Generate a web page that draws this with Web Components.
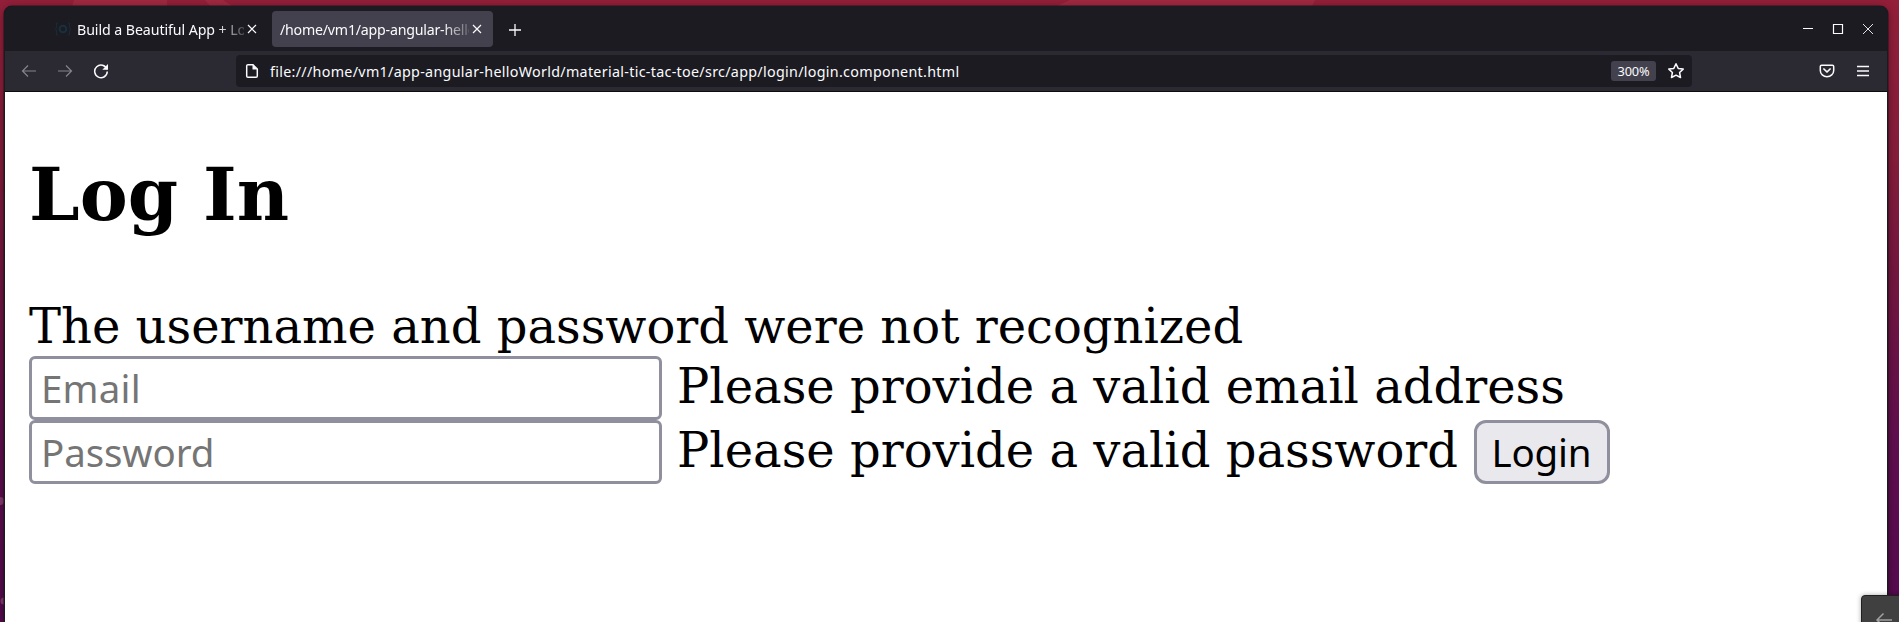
<!DOCTYPE html>
<html lang="en"><head><meta charset="utf-8"><title>Log In</title>
<style>html,body{margin:0;height:100%;overflow:hidden}</style></head>
<body><desk-top></desk-top>
<script>
const define = (name, html, after) => customElements.define(name, class extends HTMLElement {
  constructor(){ super(); this.attachShadow({mode:'open'}).innerHTML = html; }
  connectedCallback(){ if (after) after(this, this.shadowRoot); }
});

/* A single line of text tracked so that it fills the width given in its "w" attribute. */
define('fit-text', `<style>:host{display:block;white-space:nowrap}span{display:inline-block}</style><span><slot></slot></span>`,
  (el, root) => {
    const s = root.querySelector('span'), n = el.textContent.length;
    const w = s.getBoundingClientRect().width;
    if (w) s.style.letterSpacing = ((+el.getAttribute('w') - w) / n).toFixed(3) + 'px';
  });

const icons = {
  back:'<path d="M15 8H1.500M7 2.500 1.500 8 7 13.500"/>',
  forward:'<path d="M1 8h13.500M9 2.500 14.500 8 9 13.500"/>',
  reload:'<path d="M13.900 6.200A6.300 6.300 0 1 0 14.300 8.600" stroke-width="1.500"/><path d="M15 1v5.700H9.300z" fill="currentColor" stroke="none"/>',
  page:'<path d="M4 1.700h5L13.300 6v7a1.300 1.300 0 0 1-1.300 1.300H4A1.300 1.300 0 0 1 2.700 13V3A1.300 1.300 0 0 1 4 1.700z" stroke-width="1.500"/><path d="M8.500 1.500v5h5z" fill="currentColor" stroke="none"/>',
  star:'<path d="M8 .8l2.200 4.600 5 .7-3.600 3.400.9 5L8 12.200l-4.500 2.300.9-5L.8 6.100l5-.7z" stroke-width="1.500" stroke-linejoin="round"/>',
  pocket:'<path d="M2.600 2.200h10.800a1.300 1.300 0 0 1 1.300 1.300V7.500a6.700 6.200 0 0 1-13.400 0V3.500a1.300 1.300 0 0 1 1.300-1.300z" stroke-width="1.500"/><path d="M4.900 6 8 9l3.100-3" stroke-width="1.700" stroke-linecap="round" stroke-linejoin="round"/>',
  menu:'<path d="M2 3.500h12M2 8h12M2 12.500h12" stroke-width="1.400"/>',
  close:'<path d="M4 4l8 8M12 4l-8 8"/>',
  plus:'<path d="M8 2v12M2 8h12" stroke-width="1.300"/>',
  min:'<path d="M3 7.500h10"/>',
  max:'<path d="M3.500 3.500h9v9h-9z"/>',
  exit:'<path d="M3 3l10 10M13 3 3 13" stroke-width=".9"/>',
  favicon:'<path d="M3 2H1.500v4L.6 8l.9 2v4H3M13 2h1.500v4l.9 2-.9 2v4H13" stroke-width=".8"/><circle cx="8" cy="8" r="3.300" stroke-width="2"/>'
};
define('ui-icon', `<style>:host{display:block;width:16px;height:16px;flex:none}svg{display:block;width:100%;height:100%}</style>
<svg viewBox="0 0 16 16" fill="none" stroke="currentColor" stroke-width="1.200"></svg>`,
  (el, root) => root.querySelector('svg').innerHTML = icons[el.getAttribute('name')]);

define('browser-tab', `<style>
:host{display:flex;align-items:center;box-sizing:border-box;height:36px;width:221px;padding:1px 8px 0;border-radius:4px;font-size:14.200px;color:#fbfbfe}
:host([active]){background:#42414d}
.label{flex:1;min-width:0;overflow:hidden;-webkit-mask-image:linear-gradient(90deg,#000 calc(100% - 27px),#0003)}
.label{padding-top:1px}
::slotted(ui-icon){color:#18303e;margin-right:6px}
</style><slot name="icon"></slot><div class="label"><slot></slot></div><ui-icon name="close"></ui-icon>`);

define('tab-strip', `<style>
:host{display:flex;align-items:center;height:45px;background:#1c1b22;color:#fbfbfe;box-sizing:border-box;padding:0 11px 0 42px}
.second{margin-left:4px}.plus{margin:2px 0 0 14px}.win{display:flex;gap:14px;margin-left:auto}
</style>
<browser-tab><ui-icon slot="icon" name="favicon"></ui-icon><fit-text w="190">Build a Beautiful App + Login</fit-text></browser-tab>
<browser-tab active class="second"><fit-text w="209">/home/vm1/app-angular-helloW</fit-text></browser-tab>
<ui-icon class="plus" name="plus"></ui-icon>
<div class="win"><ui-icon name="min"></ui-icon><ui-icon name="max"></ui-icon><ui-icon name="exit"></ui-icon></div>`);

define('tool-bar', `<style>
:host{display:flex;align-items:center;height:40px;background:#2b2a33;color:#fbfbfe;box-sizing:border-box;padding:0 16px}
.off{color:#85848a}.gap{margin-left:20px}
.url{display:flex;align-items:center;box-sizing:border-box;width:1456px;height:32px;margin-left:127px;border-radius:4px;background:#1c1b22;padding:0 8px;font-size:14.300px}
.url fit-text{margin-left:10px}
.zoom{margin-left:auto;width:45px;height:20px;line-height:21px;border-radius:3px;background:#42414d;font-size:12.800px;display:flex;justify-content:center}
.url .zoom fit-text{margin:0}
.star{margin:0 0 0 12px}
.pocket{margin-left:auto}
</style>
<ui-icon class="off" name="back"></ui-icon><ui-icon class="off gap" name="forward"></ui-icon><ui-icon class="gap" name="reload"></ui-icon>
<div class="url"><ui-icon name="page"></ui-icon><fit-text w="689.500">file:///home/vm1/app-angular-helloWorld/material-tic-tac-toe/src/app/login/login.component.html</fit-text>
<div class="zoom"><fit-text w="32">300%</fit-text></div><ui-icon class="star" name="star"></ui-icon></div>
<ui-icon class="pocket" name="pocket"></ui-icon><ui-icon class="gap" name="menu"></ui-icon>`);

define('text-field', `<style>
:host{display:block;width:633px;height:64px}
input{box-sizing:border-box;width:100%;height:100%;margin:0;border:3px solid #8f8f9d;border-radius:6px;padding:0 9px 1px;background:#fff;font:38.500px "Noto Sans",sans-serif;outline:0;display:block}
input::placeholder{color:#757575;opacity:1;letter-spacing:var(--track,0)}
</style><input>`, (el, root) => {
  const i = root.querySelector('input'); i.placeholder = el.getAttribute('label'); i.type = el.getAttribute('type');
});

define('login-button', `<style>:host{display:block}
button{box-sizing:border-box;width:136px;height:64px;border:3px solid #8f8f9d;border-radius:12px;background:#e9e9ed;color:#000;padding:0 1px 1px 0;margin:0;font:38.500px "Noto Sans",sans-serif;display:flex;align-items:center;justify-content:center}
</style><button><fit-text w="100">Login</fit-text></button>`);

define('login-page', `<style>
:host{display:block;flex:1;background:#fff;color:#000;font:48px/56px "DejaVu Serif",serif;padding:0 24px;overflow:hidden}
h1{font-size:72px;line-height:84px;margin:61px 0 0;white-space:nowrap}
p{margin:61px 0 0;height:58px;line-height:56px;white-space:nowrap}
.row{display:flex;height:64px;white-space:nowrap}
.row span{margin-left:15px;line-height:60px}
login-button{margin-left:16px}
.row .mail{--track:.2px}.row .pass{--track:-.1px}
</style>
<h1>Log In</h1><p>The username and password were not recognized</p>
<div class="row"><text-field class="mail" type="email" label="Email"></text-field><span>Please provide a valid email address</span></div>
<div class="row"><text-field class="pass" type="password" label="Password"></text-field><span>Please provide a valid password</span><login-button></login-button></div>`);

define('browser-window', `<style>
:host{display:flex;flex-direction:column;box-sizing:border-box;width:1884px;height:616px;border:solid #1b1a20;border-width:0 1px;border-radius:8px 8px 0 0;overflow:hidden;background:#1c1b22;box-shadow:0 0 0 .5px #2a1520,0 2px 10px #0006}
tool-bar{border-bottom:1px solid #0c0c0d;height:41px}
</style><tab-strip></tab-strip><tool-bar></tool-bar><login-page></login-page>`);

define('desk-top', `<style>
:host{display:block;position:relative;box-sizing:border-box;width:1899px;height:622px;overflow:hidden;padding:6px 0 0 4px;
 font-family:"Noto Sans",sans-serif;background:linear-gradient(#931f39,#861d3b 25%,#741640 45%,#600e50 72%,#560a50)}
.wall{position:absolute;left:0;top:0;width:1899px;height:622px}
browser-window{position:relative}
.corner{position:absolute;left:1861px;top:595px;width:60px;height:40px;box-sizing:border-box;border:1px solid #202020;border-radius:4px 0 0 0;background:#404040;box-shadow:0 0 5px #0005}
.corner svg{display:block}
</style>
<svg class="wall" viewBox="0 0 1899 622"><path d="M74 0h93v6H72zM205 0h18l9 6h-22zM1070 0h245l-3 6h-255z" fill="#9f2940"/><g fill="#85396f"><circle cx="0" cy="501" r="4"/><circle cx="4" cy="601" r="3.500"/></g></svg>
<browser-window></browser-window>
<div class="corner"><svg width="37" height="26" fill="none" stroke="#a0a0a0" stroke-width="1.500"><path d="M30 24H15M21.500 17.500 15 24l6.500 6.500"/></svg></div>`);
</script></body></html>
